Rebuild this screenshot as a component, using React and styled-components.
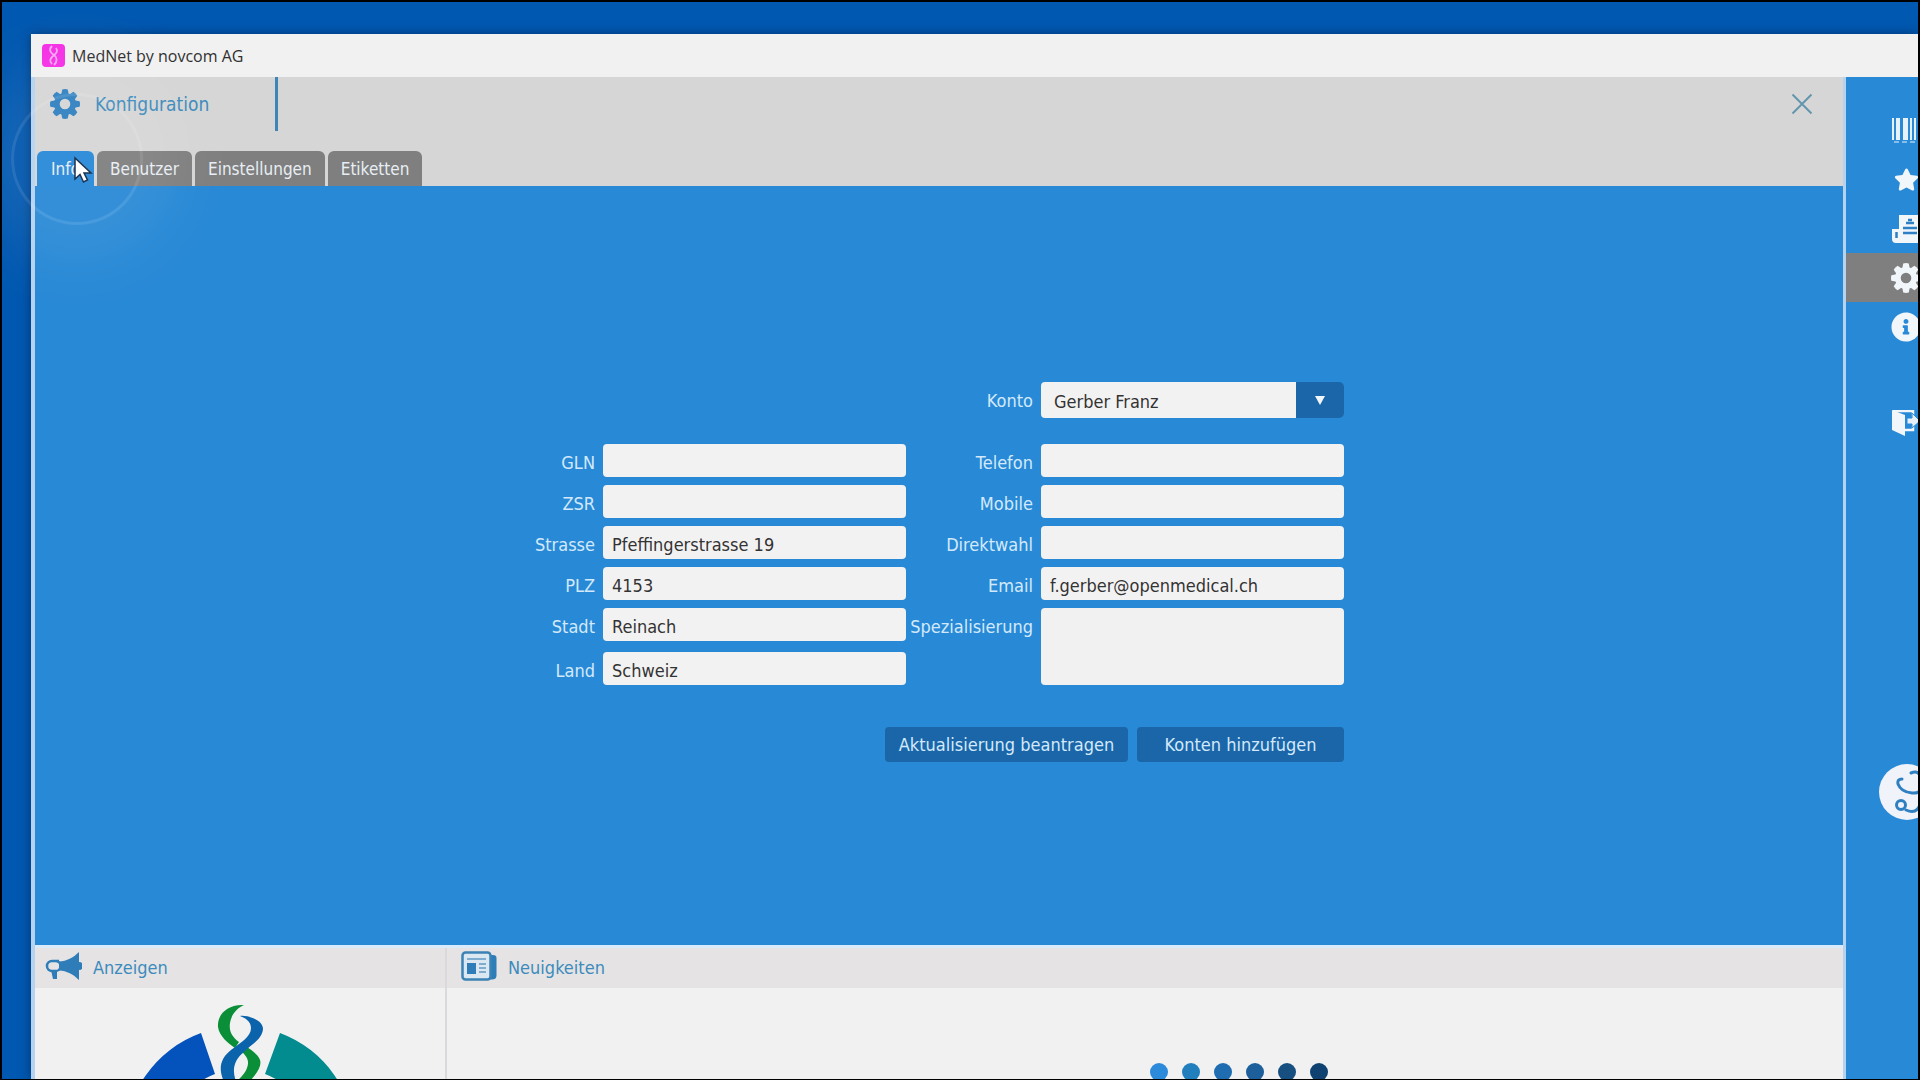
import styled, { createGlobalStyle } from "styled-components"
import { FaInfoCircle, FaStar } from "react-icons/fa"

const tabs = ["Info", "Benutzer", "Einstellungen", "Etiketten"]
const dots = ["#2b8ad9", "#217fbd", "#1f6db0", "#1c5f9a", "#174f80", "#0f4270"]

export default function App() {
  return (
    <Desktop>
      <GlobalStyle />
      <Window>
        <TitleBar>
          <AppIcon />
          <span>MedNet by novcom AG</span>
        </TitleBar>
        <Body>
          <Content>
            <Header>
              <HeaderTop>
                <PageTitle>
                  <Gear size={30} />
                  <h1>Konfiguration</h1>
                </PageTitle>
                <CloseButton aria-label="Schliessen">
                  <svg width="22" height="22" viewBox="0 0 22 22" aria-hidden="true">
                    <path d="M1.500 1.500 20.500 20.500M20.500 1.500 1.500 20.500" stroke="#5f94ad" strokeWidth="1.800" />
                  </svg>
                </CloseButton>
              </HeaderTop>
              <Tabs role="tablist">
                {tabs.map((tab, i) => (
                  <Tab key={tab} role="tab" aria-selected={i === 0} $active={i === 0}>{tab}</Tab>
                ))}
              </Tabs>
            </Header>
            <Main>
              <Form onSubmit={(e) => e.preventDefault()}>
                <AccountRow>
                  <Label htmlFor="konto">Konto</Label>
                  <SelectBox>
                    <Select id="konto" defaultValue="Gerber Franz">
                      <option>Gerber Franz</option>
                    </Select>
                    <Arrow>
                      <svg width="10" height="9" viewBox="0 0 10 9" aria-hidden="true">
                        <path d="M0 0H10L5 9Z" fill="#f1f6fb" />
                      </svg>
                    </Arrow>
                  </SelectBox>
                </AccountRow>
                <Fields>
                  <Field name="GLN" />
                  <Field name="Telefon" />
                  <Field name="ZSR" />
                  <Field name="Mobile" />
                  <Field name="Strasse" value="Pfeffingerstrasse 19" />
                  <Field name="Direktwahl" />
                  <Field name="PLZ" value="4153" />
                  <Field name="Email" value="f.gerber@openmedical.ch" />
                  <Field name="Stadt" value="Reinach" />
                  <Label htmlFor="Spezialisierung">Spezialisierung</Label>
                  <TextArea id="Spezialisierung" />
                  <Field name="Land" value="Schweiz" />
                </Fields>
                <Actions>
                  <ActionButton type="button" $width="243px">Aktualisierung beantragen</ActionButton>
                  <ActionButton type="button" $width="207px">Konten hinzufügen</ActionButton>
                </Actions>
              </Form>
            </Main>
            <Bottom>
              <Ads>
                <PanelHeader>
                  <MegaphoneIcon />
                  <h2>Anzeigen</h2>
                </PanelHeader>
                <WheelLogo />
              </Ads>
              <News>
                <PanelHeader>
                  <NewsIcon />
                  <h2>Neuigkeiten</h2>
                </PanelHeader>
                <Loader>
                  {dots.map((color) => <Dot key={color} $color={color} />)}
                </Loader>
              </News>
            </Bottom>
          </Content>
          <Sidebar>
            <SideButton aria-label="Barcode"><BarcodeIcon /></SideButton>
            <SideButton aria-label="Favoriten"><FaStar size={25} /></SideButton>
            <SideButton aria-label="Berichte"><ReportIcon /></SideButton>
            <SideButton aria-label="Konfiguration" $active><Gear size={30} /></SideButton>
            <SideButton aria-label="Info"><FaInfoCircle size={30} /></SideButton>
            <LogoutButton aria-label="Abmelden"><LogoutIcon /></LogoutButton>
            <SupportButton aria-label="Support"><StethoscopeIcon /></SupportButton>
          </Sidebar>
        </Body>
      </Window>
      <ClickRing />
      <Cursor width="20" height="28" viewBox="0 0 20 28" aria-hidden="true">
        <path d="M2 2V23L7 18.500 10.500 26 14.500 24 11 17H18Z" fill="#fff" stroke="#1d3350" strokeWidth="1.500" />
      </Cursor>
    </Desktop>
  )
}

function Field({ name, value = "" }) {
  const last = name === "Land"
  return (
    <>
      <Label htmlFor={name} $end={last}>{name}</Label>
      <Input id={name} defaultValue={value} $end={last} />
    </>
  )
}

function Gear({ size }) {
  return (
    <svg width={size} height={size} viewBox="-15 -15 30 30" fill="currentColor" aria-hidden="true">
      {[0, 45, 90, 135, 180, 225, 270, 315].map((angle) => (
        <path key={angle} d="M-4-8-2.800-14.600Q0-15.400 2.800-14.600L4-8Z" transform={`rotate(${angle})`} />
      ))}
      <path fillRule="evenodd" d="M0-11A11 11 0 1 1 0 11 11 11 0 1 1 0-11ZM0-5.300A5.300 5.300 0 1 0 0 5.300 5.300 5.300 0 1 0 0-5.300Z" />
    </svg>
  )
}

function AppIcon() {
  return (
    <svg width="23" height="23" viewBox="0 0 23 23" fill="none" aria-hidden="true">
      <rect width="23" height="23" rx="4" fill="#f52fe6" />
      <path d="M10 2C6 6 9 9 12 11S16 17 12 21M14 4C17 8 13 10 10 13S8 18 10 20" stroke="#fba6f5" strokeWidth="1.800" />
    </svg>
  )
}

function BarcodeIcon() {
  return (
    <svg width="28" height="26" viewBox="0 0 28 26" fill="#e6f1fb" aria-hidden="true">
      <path d="M0 0H2V22H0ZM4 0H8V22H4ZM11 0H16V22H11ZM18 0H20V22H18ZM22 0H24V22H22ZM26 0H28V22H26Z" />
      <path d="M2 23H7V25H2ZM10 23H15V25H10ZM18 23H23V25H18Z" opacity="0.5" />
    </svg>
  )
}

function MegaphoneIcon() {
  return (
    <svg width="37" height="28" viewBox="0 0 37 28" aria-hidden="true">
      <path d="M34 0V28C28 22 22 19 14 18.500V9.500C22 9 28 6 34 0Z" fill="#2f7db8" />
      <path d="M34 10A4 4 0 0 1 34 18Z" fill="#2f7db8" />
      <path d="M14 9H7A5 5 0 0 0 7 19H10A5 5 0 0 0 11 9" fill="none" stroke="#2f7db8" strokeWidth="2.500" />
      <path d="M6 18H12V27H8Z" fill="#2f7db8" />
    </svg>
  )
}

function NewsIcon() {
  return (
    <svg width="36" height="30" viewBox="0 0 36 30" fill="none" aria-hidden="true">
      <path d="M30 4H32Q35.500 4 35.500 7V25Q35 28.500 31 28.500H29Z" fill="#2f7db8" />
      <rect x="1.500" y="1.500" width="28" height="27" rx="3" fill="#dbe8f2" stroke="#3b82b5" strokeWidth="2.500" />
      <rect x="6" y="12" width="9" height="11" fill="#2f7db8" />
      <path d="M6 8H25M18 13H25M18 17H25M18 21H25" stroke="#7fadcf" strokeWidth="2" />
    </svg>
  )
}

function ReportIcon() {
  return (
    <svg width="28" height="28" viewBox="0 0 28 28" aria-hidden="true">
      <path d="M7 0H25Q28 0 28 3V25Q28 28 25 28H4Q0 28 0 24V14H7Z" fill="#f1f6fb" />
      <path d="M4.500 17V23M11 18H25M11 13H25M14 8H22M16 5H20" stroke="#2f7fc4" strokeWidth="2.500" />
    </svg>
  )
}

function LogoutIcon() {
  return (
    <svg width="28" height="26" viewBox="0 0 28 26" aria-hidden="true">
      <path d="M1 1H21V7M21 16V20H13" fill="none" stroke="#f1f6fb" strokeWidth="2.500" />
      <path d="M0 0 13 5V26L0 20Z" fill="#f1f6fb" />
      <path d="M15 8H20V3L28 11 20 18V14H15Z" fill="#e4effa" stroke="#2b8ad9" />
    </svg>
  )
}

function StethoscopeIcon() {
  return (
    <svg width="56" height="56" viewBox="0 0 56 56" fill="none" aria-hidden="true">
      <g stroke="#2f80c0" strokeWidth="3" strokeLinecap="round">
        <path d="M23 15Q18 15 19 20 22 28 33 29 44 30 42 19M32 9Q39 6 41 12L42 19" />
        <circle cx="22" cy="41" r="4.500" />
        <path d="M27 46Q36 50 40 43 42 36 46 32" />
      </g>
    </svg>
  )
}

function WheelLogo() {
  return (
    <svg width="232" height="256" viewBox="123 1003 232 256" aria-hidden="true">
      <path d="M200 1033 214 1074A72 72 0 0 0 167 1142H124A115 115 0 0 1 200 1033Z" fill="#0452bb" />
      <path d="M279 1033 264 1074A72 72 0 0 1 311 1142H354A115 115 0 0 0 279 1033Z" fill="#028c90" />
      <path d="M243 1005C226 1004 216 1015 217 1027 218 1036 228 1044 234 1048L238 1042C230 1036 228 1030 229 1023 230 1015 236 1008 243 1005Z" fill="#0a8f38" />
      <path d="M239 1050C248 1058 248 1062 246 1068 244 1074 238 1079 233 1084H246C256 1074 261 1066 259 1060 257 1054 250 1050 246 1047Z" fill="#0a8f38" />
      <path d="M239 1016C247 1015 262 1020 262 1029 261 1040 250 1044 243 1052 233 1060 230 1070 236 1084H224C216 1068 220 1058 230 1050 240 1042 250 1037 250 1028 250 1021 244 1018 239 1016Z" fill="#0a63ab" />
    </svg>
  )
}

const GlobalStyle = createGlobalStyle`
  * {
    box-sizing: border-box;
  }
  body {
    margin: 0;
    background: #000000;
    font-family: 'DejaVu Sans Condensed', 'DejaVu Sans', sans-serif;
    font-size: 18px;
  }
  button, input, select, textarea {
    font: inherit;
    border: 0;
    padding: 0;
  }
  h1, h2 {
    margin: 0;
    font-weight: 400;
    color: #3d8bbd;
  }
  svg {
    display: block;
    flex: none;
  }
`

const Desktop = styled.div`
  position: relative;
  height: 100vh;
  border: solid #000000;
  border-width: 2px 2px 1px;
  padding: 32px 0 0 29px;
  background: #0058b0;
  overflow: hidden;
`
const Window = styled.div`
  height: 100%;
  display: flex;
  flex-direction: column;
  background: #f1f1f1;
  box-shadow: 0 0 10px rgba(0, 20, 60, 0.5);
`
const TitleBar = styled.div`
  height: 43px;
  flex: none;
  display: flex;
  align-items: center;
  gap: 7px;
  padding-left: 11px;
  font-family: 'Open Sans', sans-serif;
  font-size: 16px;
  color: #2f2f2f;
`
const Body = styled.div`
  flex: 1;
  min-height: 0;
  display: flex;
`
const Content = styled.div`
  flex: 1;
  min-width: 0;
  display: flex;
  flex-direction: column;
  border: solid #b5d3ee;
  border-width: 0 3px 0 4px;
`
const Header = styled.header`
  height: 109px;
  display: flex;
  flex-direction: column;
  justify-content: space-between;
  background: #d6d6d6;
`
const HeaderTop = styled.div`
  display: flex;
  justify-content: space-between;
`
const PageTitle = styled.div`
  width: 243px;
  height: 54px;
  display: flex;
  align-items: center;
  gap: 15px;
  padding-left: 15px;
  border-right: 3px solid #3d86b5;
  color: #2f80c0;

  h1 {
    font-size: 19px;
  }
`
const CloseButton = styled.button`
  padding: 0 30px;
  background: none;
`
const Tabs = styled.div`
  display: flex;
  gap: 3px;
  padding-left: 2px;
`
const Tab = styled.button`
  min-width: 57px;
  height: 35px;
  padding: 0 13px;
  border-radius: 6px 6px 0 0;
  background: ${({ $active }) => ($active ? "#2889d8" : "#7f7f7f")};
  font-size: 17px;
  color: #e8eef4;
`
const Main = styled.main`
  flex: 1;
  display: flex;
  justify-content: center;
  align-items: flex-start;
  padding-top: 196px;
  background: #2889d6;
`
const Form = styled.form`
  display: flex;
  flex-direction: column;
`
const AccountRow = styled.div`
  display: flex;
  justify-content: flex-end;
  gap: 8px;
  margin-bottom: 26px;
`
const Label = styled.label`
  align-self: ${({ $end }) => ($end ? "end" : "start")};
  justify-self: end;
  white-space: nowrap;
  line-height: 37px;
  height: 33px;
  color: #d3e9fb;
`
const SelectBox = styled.div`
  position: relative;
  width: 303px;
  height: 36px;
`
const Select = styled.select`
  appearance: none;
  width: 100%;
  height: 100%;
  padding: 2px 60px 0 13px;
  border-radius: 4px 8px 8px 4px;
  background: #f3f2f3;
  color: #333333;
`
const Arrow = styled.span`
  position: absolute;
  top: 0;
  right: 0;
  width: 48px;
  height: 100%;
  display: flex;
  align-items: center;
  justify-content: center;
  border-radius: 0 5px 5px 0;
  background: #1a66a8;
  pointer-events: none;
`
const Fields = styled.div`
  display: grid;
  grid-template-columns: 61px 303px 119px 303px;
  grid-template-rows: repeat(5, 33px) auto;
  gap: 8px;
`
const Input = styled.input`
  align-self: ${({ $end }) => ($end ? "end" : "start")};
  width: 100%;
  height: 33px;
  padding: 3px 9px 0;
  border-radius: 4px;
  background: #f3f2f3;
  color: #333333;
`
const TextArea = styled.textarea`
  grid-row: span 2;
  height: 77px;
  padding: 6px 9px;
  border-radius: 4px;
  background: #f1f1f1;
  resize: none;
`
const Actions = styled.div`
  display: flex;
  justify-content: flex-end;
  gap: 9px;
  margin-top: 42px;
`
const ActionButton = styled.button`
  width: ${({ $width }) => $width};
  height: 35px;
  border-radius: 4px;
  background: #1a66a8;
  color: #d3e9fb;
`
const Bottom = styled.div`
  height: 134px;
  display: flex;
  border-top: 3px solid #d9ebfb;
  overflow: hidden;
`
const Ads = styled.section`
  width: 412px;
  display: flex;
  flex-direction: column;
  align-items: center;
  gap: 15px;
  border-right: 2px solid #dadadd;
`
const News = styled.section`
  flex: 1;
`
const PanelHeader = styled.div`
  width: 100%;
  height: 40px;
  flex: none;
  display: flex;
  align-items: center;
  gap: 11px;
  padding: 0 0 4px 10px;
  background: #e5e3e3;

  ${News} & {
    padding-left: 14px;
  }

  h2 {
    padding-top: 2px;
    font-size: 18px;
  }
`
const Loader = styled.div`
  display: flex;
  gap: 14px;
  padding: 75px 0 0 calc(50% + 5px);
`
const Dot = styled.span`
  width: 18px;
  height: 18px;
  flex: none;
  border-radius: 50%;
  background: ${({ $color }) => $color};
`
const Sidebar = styled.nav`
  width: 72px;
  display: flex;
  flex-direction: column;
  padding-top: 29px;
  background: #2889d6;
  overflow: hidden;
`
const SideButton = styled.button`
  width: 120px;
  height: 49px;
  flex: none;
  display: flex;
  align-items: center;
  justify-content: center;
  background: ${({ $active }) => ($active ? "#7f7f7f" : "none")};
  color: #f1f6fb;
`
const LogoutButton = styled(SideButton)`
  margin-top: 47px;
`
const SupportButton = styled(SideButton)`
  width: 56px;
  height: 56px;
  margin: 317px 0 0 33px;
  border-radius: 50%;
  background: #f1f3fb;
`
const ClickRing = styled.div`
  position: absolute;
  left: 9px;
  top: 91px;
  width: 132px;
  height: 132px;
  border: 3px solid rgba(255, 255, 255, 0.1);
  border-radius: 50%;
  box-shadow: 0 0 80px 30px rgba(255, 255, 255, 0.1);
  background: rgba(255, 255, 255, 0.06);
  pointer-events: none;
`
const Cursor = styled.svg`
  position: absolute;
  left: 71px;
  top: 154px;
  pointer-events: none;
`
